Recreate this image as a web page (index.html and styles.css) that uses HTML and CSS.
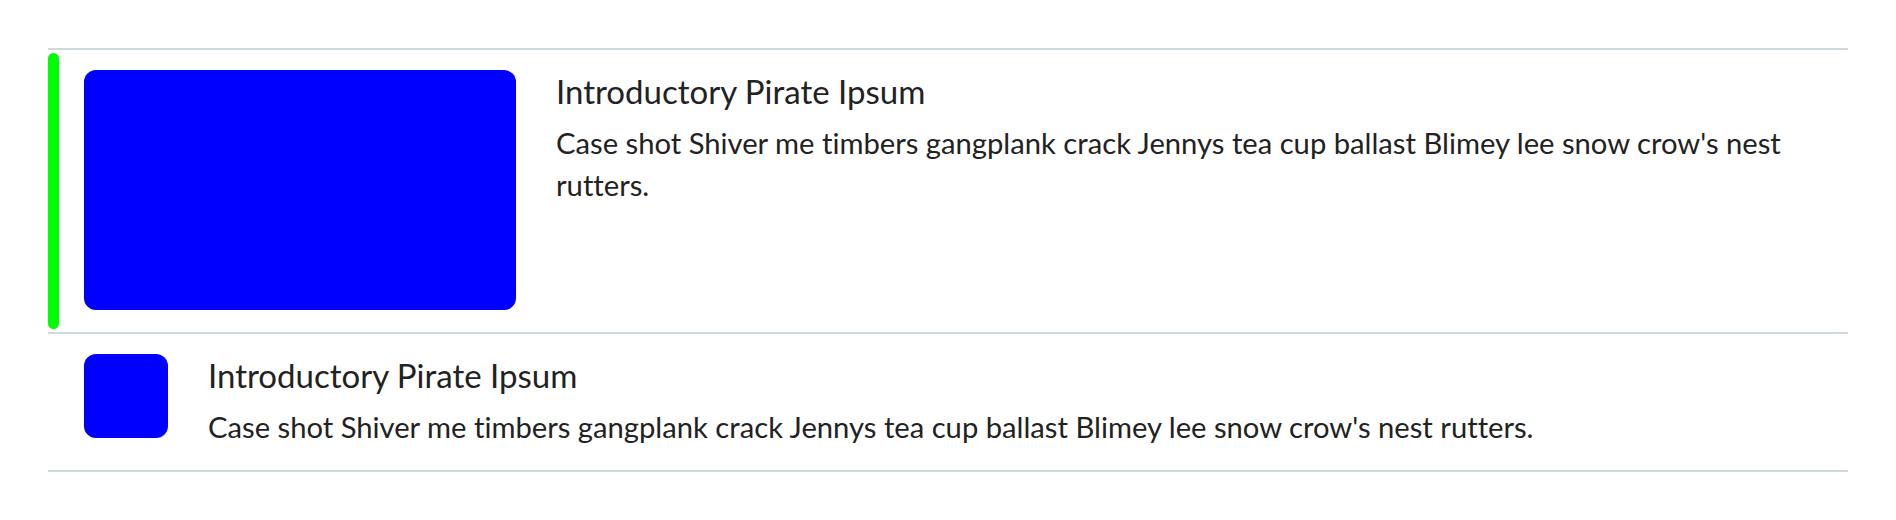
FILE: index.html
```html
<!DOCTYPE html>
<html lang="en">
<head>
<meta charset="utf-8">
<title>List</title>
<link rel="stylesheet" href="styles.css">
</head>
<body>
<div class="page">
  <ul class="list">
    <li class="item item--active">
      <span class="indicator"></span>
      <div class="thumb thumb--large"></div>
      <div class="text">
        <h3 class="title">Introductory Pirate Ipsum</h3>
        <p class="desc">Case shot Shiver me timbers gangplank crack Jennys tea cup ballast Blimey lee snow crow's nest rutters.</p>
      </div>
    </li>
    <li class="item">
      <div class="thumb thumb--small"></div>
      <div class="text">
        <h3 class="title">Introductory Pirate Ipsum</h3>
        <p class="desc">Case shot Shiver me timbers gangplank crack Jennys tea cup ballast Blimey lee snow crow's nest rutters.</p>
      </div>
    </li>
  </ul>
</div>
</body>
</html>
```

FILE: styles.css
```css
html, body {
  margin: 0;
  padding: 0;
  background: #ffffff;
}

body {
  font-family: Lato, "Noto Sans", sans-serif;
  color: #222222;
  font-variant-ligatures: none;
}

.page {
  padding: 48px 48px 0 48px;
}

.list {
  list-style: none;
  margin: 0;
  padding: 0;
  border-bottom: 2px solid #cfd8dc;
}

.item {
  position: relative;
  display: flex;
  align-items: flex-start;
  gap: 40px;
  padding: 20px 40px 22px 36px;
  border-top: 2px solid #cfd8dc;
}

.indicator {
  position: absolute;
  left: 0;
  top: 3px;
  bottom: 3px;
  width: 11px;
  border-radius: 6px;
  background: #00ff00;
}

.thumb {
  flex: none;
  background: #0000ff;
  border-radius: 12px;
}

.thumb--large {
  width: 432px;
  height: 240px;
}

.thumb--small {
  width: 84px;
  height: 84px;
}

.text {
  flex: 1;
  min-width: 0;
}

.title {
  margin: 0 0 10px 0;
  font-size: 33px;
  line-height: 42px;
  font-weight: 400;
}

.desc {
  margin: 0;
  font-size: 29.2px;
  line-height: 42px;
}
```
